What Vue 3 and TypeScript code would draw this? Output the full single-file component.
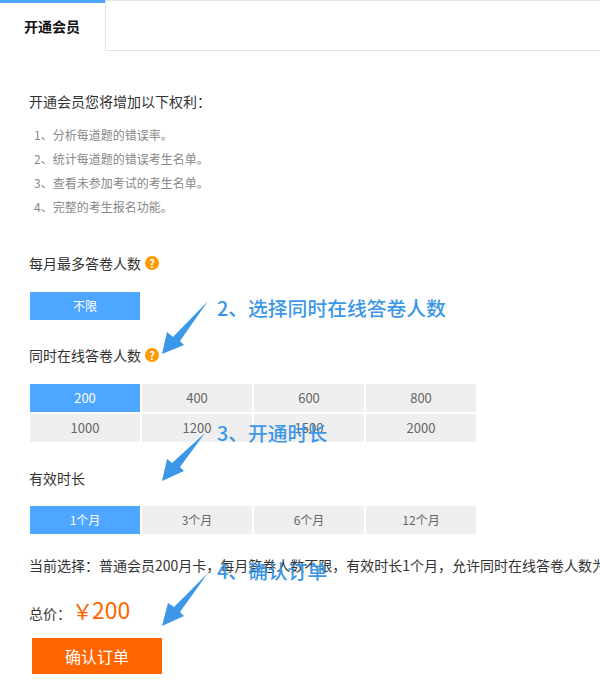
<script setup lang="ts">
const benefits: string[] = [
  '分析每道题的错误率。',
  '统计每道题的错误考生名单。',
  '查看未参加考试的考生名单。',
  '完整的考生报名功能。',
]
const concurrent: string[] = ['200', '400', '600', '800', '1000', '1200', '1500', '2000']
const durations: string[] = ['1个月', '3个月', '6个月', '12个月']
const summary =
  '当前选择：普通会员200月卡，每月答卷人数不限，有效时长1个月，允许同时在线答卷人数为200人。'
</script>

<template>
  <div class="page">
    <div class="tabs">
      <div class="tab">开通会员</div>
      <div class="tab-rest"></div>
    </div>

    <div class="content">
      <p class="intro">开通会员您将增加以下权利：</p>
      <ol class="benefits">
        <li v-for="(b, i) in benefits" :key="b">{{ i + 1 }}、{{ b }}</li>
      </ol>

      <div class="label first-label">每月最多答卷人数<span class="help">?</span></div>
      <div class="options">
        <div class="opt on">不限</div>
      </div>

      <div class="label">同时在线答卷人数<span class="help">?</span></div>
      <div class="options numeric">
        <div v-for="(c, i) in concurrent" :key="c" class="opt" :class="{ on: i === 0 }">{{ c }}</div>
      </div>

      <div class="label third-label">有效时长</div>
      <div class="options tight">
        <div v-for="(d, i) in durations" :key="d" class="opt" :class="{ on: i === 0 }">{{ d }}</div>
      </div>

      <div class="summary">{{ summary }}</div>

      <div class="total">
        <span class="total-label">总价：</span>
        <span class="price"><span class="yen">￥</span>200</span>
      </div>
      <button class="confirm" type="button">确认订单</button>
    </div>

    <svg class="arrows" width="600" height="686" viewBox="0 0 600 686" aria-hidden="true">
      <polygon points="208,301 173,337 167,332 162,354 184,345 180,341" />
      <polygon points="205,433 172,463 167,459 162,481 184,471 180,467" />
      <polygon points="208,573 174,607 168,603 162,626 184,616 180,612" />
    </svg>
    <span class="note note-2">2、选择同时在线答卷人数</span>
    <span class="note note-3">3、开通时长</span>
    <span class="note note-4">4、确认订单</span>
  </div>
</template>

<style scoped>
.page {
  position: relative;
  width: 600px;
  height: 686px;
  overflow: hidden;
  background: #fff;
  color: #333;
  font-family: "Noto Sans CJK SC", "Liberation Sans", sans-serif;
  font-size: 14px;
}
.tabs {
  display: flex;
  height: 51px;
}
.tab {
  width: 105px;
  box-sizing: border-box;
  border-top: 3px solid #4da6ff;
  padding: 13px 0 0 24px;
  line-height: 20px;
  font-weight: 700;
  color: #111;
}
.tab-rest {
  flex: 1;
  border: 1px solid #e2e2e2;
  border-right: 0;
}
.content {
  padding: 40px 0 0 30px;
}
.intro {
  margin: 0 0 0 -1px;
  line-height: 20px;
}
.benefits {
  list-style: none;
  margin: 12px 0 0;
  padding: 0 0 0 4px;
  font-size: 12px;
  line-height: 24px;
  color: #888;
}
.label {
  display: flex;
  align-items: center;
  margin: 25px 0 0 -1px;
  height: 20px;
}
.first-label {
  margin-top: 34px;
}
.third-label {
  margin-top: 26px;
}
.help {
  width: 14px;
  height: 14px;
  margin-left: 4px;
  border-radius: 50%;
  background: #ff9900;
  color: #fff;
  font-size: 11px;
  font-weight: 700;
  line-height: 14px;
  text-align: center;
}
.options {
  display: grid;
  grid-template-columns: repeat(4, 110px);
  gap: 2px;
  margin-top: 19px;
}
.options.tight {
  margin-top: 18px;
}
.opt {
  height: 28px;
  line-height: 28px;
  text-align: center;
  font-size: 12px;
  background: #efefef;
  color: #666;
}
.numeric .opt {
  font-size: 13px;
}
.opt.on {
  background: #4da6ff;
  color: #fff;
}
.summary {
  margin: 21px 0 0 -1px;
  line-height: 20px;
  white-space: nowrap;
}
.total {
  display: flex;
  align-items: baseline;
  margin: 17px 0 12px -1px;
  height: 34px;
  line-height: 34px;
}
.price {
  font-size: 23px;
  color: #ff6600;
}
.yen {
  margin: 0 -1px 0 1px;
  font-size: 21px;
}
.confirm {
  display: block;
  width: 130px;
  height: 36px;
  margin: 0 0 0 2px;
  padding: 0;
  border: 0;
  background: #ff6600;
  color: #fff;
  font-family: inherit;
  font-size: 16px;
}
.arrows {
  position: absolute;
  left: 0;
  top: 0;
  pointer-events: none;
}
.arrows polygon {
  fill: #3c97e8;
}
.note {
  position: absolute;
  left: 217px;
  font-size: 19.8px;
  font-weight: 500;
  line-height: 26px;
  white-space: nowrap;
  color: #3c97e8;
}
.note-2 {
  top: 295px;
}
.note-3 {
  top: 420px;
}
.note-4 {
  top: 558px;
}
</style>
